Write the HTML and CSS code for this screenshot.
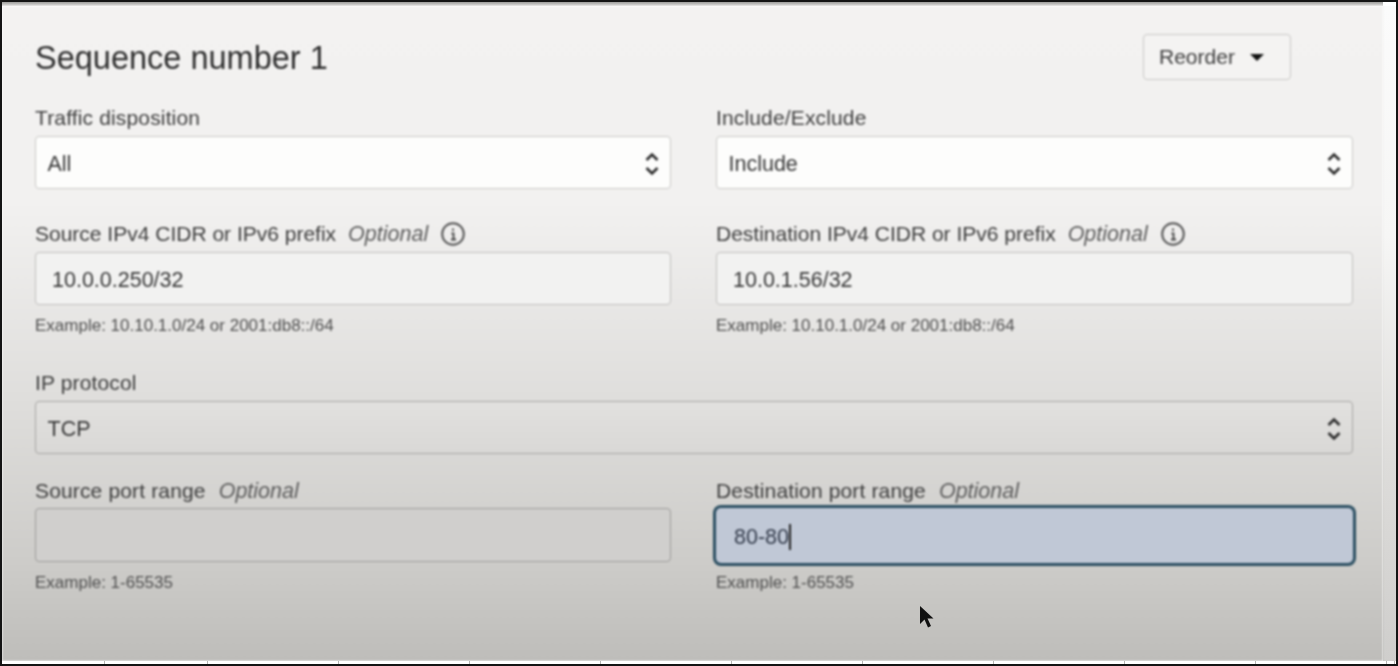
FILE: index.html
```html
<!DOCTYPE html>
<html lang="en">
<head>
<meta charset="utf-8">
<title>Sequence number 1</title>
<link rel="stylesheet" href="styles.css">
</head>
<body>
<div class="frame">
  <div class="topline"></div>
  <div class="middle">
    <main class="panel">
      <header class="head">
        <h1 class="title">Sequence number 1</h1>
        <div class="reorder"><span>Reorder</span><span class="caret"></span></div>
      </header>
      <section class="grid row-1">
        <div class="field">
          <div class="label">Traffic disposition</div>
          <div class="control select tone-1"><span class="value">All</span>
            <svg class="updown" viewBox="0 0 14 26"><path d="M1.500 10 7 4.500l5.500 5.500M1.500 18 7 23.500l5.500-5.500"/></svg></div>
        </div>
        <div class="field">
          <div class="label">Include/Exclude</div>
          <div class="control select tone-1"><span class="value">Include</span>
            <svg class="updown" viewBox="0 0 14 26"><path d="M1.500 10 7 4.500l5.500 5.500M1.500 18 7 23.500l5.500-5.500"/></svg></div>
        </div>
      </section>
      <section class="grid row-2">
        <div class="field">
          <div class="label">Source IPv4 CIDR or IPv6 prefix<em class="opt">Optional</em>
            <svg class="info" viewBox="0 0 26 26"><circle cx="13" cy="13" r="10.800"/><path class="info-i" d="M13 7.500v2.200M11.500 12.500H13.500V18M11 18.500h5"/></svg></div>
          <div class="control input tone-2"><span class="value">10.0.0.250/32</span></div>
          <div class="hint">Example: 10.10.1.0/24 or 2001:db8::/64</div>
        </div>
        <div class="field">
          <div class="label">Destination IPv4 CIDR or IPv6 prefix<em class="opt">Optional</em>
            <svg class="info" viewBox="0 0 26 26"><circle cx="13" cy="13" r="10.800"/><path class="info-i" d="M13 7.500v2.200M11.500 12.500H13.500V18M11 18.500h5"/></svg></div>
          <div class="control input tone-2"><span class="value">10.0.1.56/32</span></div>
          <div class="hint">Example: 10.10.1.0/24 or 2001:db8::/64</div>
        </div>
      </section>
      <section class="row-3">
        <div class="field">
          <div class="label">IP protocol</div>
          <div class="control select tone-3"><span class="value">TCP</span>
            <svg class="updown" viewBox="0 0 14 26"><path d="M1.500 10 7 4.500l5.500 5.500M1.500 18 7 23.500l5.500-5.500"/></svg></div>
        </div>
      </section>
      <section class="grid row-4">
        <div class="field">
          <div class="label">Source port range<em class="opt">Optional</em></div>
          <div class="control input tone-4"></div>
          <div class="hint">Example: 1-65535</div>
        </div>
        <div class="field">
          <div class="label">Destination port range<em class="opt">Optional</em></div>
          <div class="control input focused"><span class="value">80-80</span><span class="text-caret"></span></div>
          <div class="hint">Example: 1-65535</div>
        </div>
      </section>
    </main>
    <div class="edge"></div>
  </div>
  <div class="ticks"><i></i><i></i><i></i><i></i><i></i><i></i><i></i><i></i><i></i><i></i><i></i><i></i></div>
  <svg class="pointer" viewBox="0 0 16 24"><path d="M1 1v18l4.500-4.500 3.500 8 3-1.500-3.500-7.500H14.500z"/></svg>
</div>
</body>
</html>
```
FILE: styles.css
```css
* { box-sizing: border-box; }
html, body { margin: 0; height: 666px; overflow: hidden; background: #fff; }
body { font-family: "Liberation Sans", Arial, sans-serif; color: #444; }

.frame {
  position: relative;
  width: 1398px;
  height: 666px;
  border: 2px solid #141414;
  display: flex;
  flex-direction: column;
  background: #fff;
  overflow: hidden;
}
.topline {
  height: 4px;
  width: 1381px;
  background: linear-gradient(#9d9d9b, #dddcda);
  flex: none;
}
.middle { flex: 1; display: flex; min-height: 0; }
.panel {
  width: 1381px;
  flex: none;
  padding: 28px 0 0 33px;
  background: linear-gradient(#f3f2f1 0, #f2f1f0 30%, #dfdedc 60%, #cdccc9 85%, #bebdba 100%);
  filter: blur(0.8px);
}
.edge {
  flex: 1;
  background: linear-gradient(#fbfbfb 0, #f6f6f5 35%, #dddcda 70%, #cfcecc 100%);
}
.head {
  display: flex;
  justify-content: space-between;
  align-items: center;
  height: 46px;
  width: 1256px;
  margin-bottom: 26px;
}
.title {
  margin: 0;
  padding-top: 2px;
  font-size: 32.500px;
  font-weight: 400;
  color: #2e2e2e;
}
.reorder {
  display: flex;
  align-items: center;
  gap: 15px;
  width: 148px;
  height: 46px;
  padding-left: 15px;
  border: 1.500px solid #c9c8c6;
  border-radius: 4px;
  background: #f4f3f2;
  font-size: 21px;
  color: #3c3c3c;
}
.caret {
  width: 0;
  height: 0;
  border-left: 7px solid transparent;
  border-right: 7px solid transparent;
  border-top: 7px solid #111;
}
.grid {
  display: grid;
  grid-template-columns: 636px 637px;
  column-gap: 45px;
}
.row-2 { margin-top: 33px; }
.row-3 { margin-top: 36px; width: 1318px; }
.row-4 { margin-top: 25px; }
.label {
  height: 24px;
  margin-bottom: 6px;
  display: flex;
  align-items: center;
  font-size: 21px;
  color: #3c3c3c;
  white-space: nowrap;
}
.row-1 .label, .row-3 .label, .row-4 .label { letter-spacing: 0.150px; }
.opt {
  margin-left: 12px;
  font-size: 21.500px;
  color: #5c5c5c;
  font-style: italic;
}
.row-4 .opt { margin-left: 13px; letter-spacing: 0; }
.info {
  width: 26px;
  height: 26px;
  margin-left: 12px;
  fill: none;
  stroke: #555;
  stroke-width: 2;
}
.info-i { stroke: #444; stroke-width: 1.800; }
.control {
  position: relative;
  display: flex;
  align-items: center;
  justify-content: space-between;
  height: 53px;
  border: 1.500px solid #d2d1cf;
  border-radius: 4px;
  font-size: 21.500px;
  color: #363636;
}
.value { padding-top: 3px; }
.select { padding: 0 11px 0 11.500px; }
.input { padding: 0 16px; }
.tone-1 { background: #fdfdfc; border-color: #c9c8c6; }
.tone-2 { background: #f2f2f1; border-color: #c0bfbd; }
.tone-3 { background: linear-gradient(#e2e1df, #d9d8d6); border-color: #a6a5a3; }
.tone-4 { background: #d0cfcd; border-color: #9d9c9a; }
.row-3 .control { width: 1318px; }
.row-4 .label { margin-bottom: 5px; }
.row-4 .control { height: 54px; }
.row-4 .focused { height: 55px; }
.row-4 .focused + .hint { margin-top: 10px; }
.focused {
  justify-content: flex-start;
  background: #c0c8d6;
  border: 0;
  border-radius: 5px;
  box-shadow: 0 0 0 3px #2c4f62;
  color: #333b4b;
  padding-left: 18px;
}
.text-caret { width: 1.500px; height: 26px; margin-top: 2px; background: #222; }
.updown {
  width: 14px;
  height: 26px;
  fill: none;
  stroke: #2c2c2c;
  stroke-width: 2.600;
}
.hint {
  height: 19px;
  margin-top: 11px;
  font-size: 17px;
  line-height: 19px;
  color: #4e4e4e;
}
.ticks {
  position: relative;
  height: 3px;
  flex: none;
  display: grid;
  grid-template-columns: 103px 103px 131px 131px 131px 131px 131px 131px 131px 131px 131px 8px;
  background: #fff;
}
.ticks i { border-right: 1px solid #b5b5b3; }
.pointer {
  position: absolute;
  left: 917px;
  top: 603px;
  width: 16px;
  height: 24px;
  fill: #111;
  stroke: none;
  filter: blur(0.4px);
}
```
